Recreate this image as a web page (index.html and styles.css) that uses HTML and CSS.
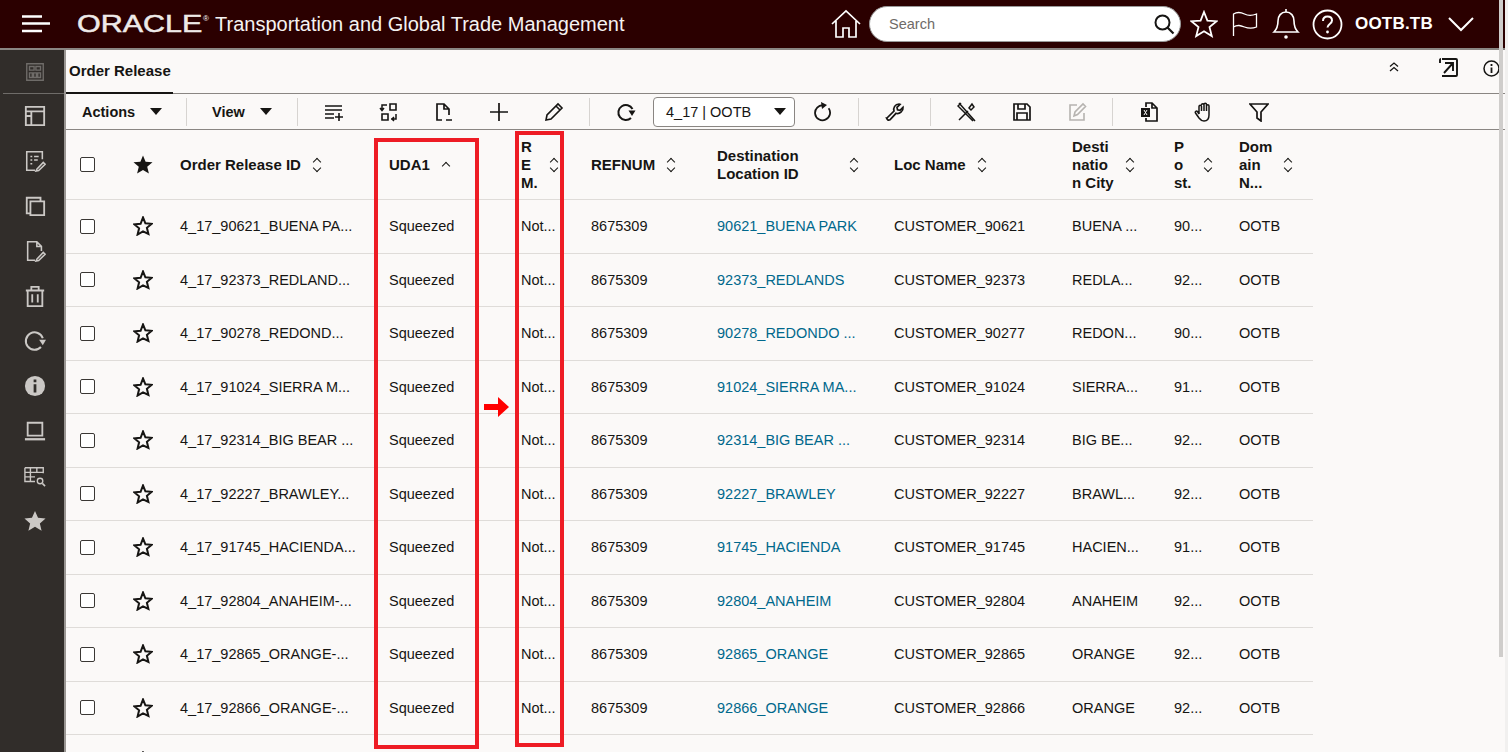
FILE: index.html
```html
<!DOCTYPE html>
<html>
<head>
	<meta charset="UTF-8">
	<title>Order Release</title>
	<link rel="stylesheet" href="styles.css">
</head>
<body>
	<header class="topbar">
		<svg class="menu-icon" width="30" height="20" viewBox="0 0 30 20"><path d="M1 2.500h20M1 9.500h28M1 17h20" stroke="#fff" stroke-width="2.400" fill="none"/></svg>
		<div class="logo">ORACLE</div><span class="logo-mark">®</span>
		<div class="app-title">Transportation and Global Trade Management</div>
		<svg class="top-icon home" width="30" height="30" viewBox="0 0 30 30"><path d="M1 15 15 2l14 13M5 12v16h7v-9h6v9h7V12" stroke="#fff" stroke-width="1.700" fill="none"/></svg>
		<div class="search">
			<span>Search</span>
			<svg width="22" height="22" viewBox="0 0 22 22"><circle cx="9.500" cy="9.500" r="7" stroke="#161513" stroke-width="2" fill="none"/><path d="m14.500 14.500 6 6" stroke="#161513" stroke-width="2.200"/></svg>
		</div>
		<svg class="top-icon star" width="28" height="28" viewBox="0 0 28 28"><path d="m14 2 3.400 8.600 9.200.6-7.100 5.900 2.300 9L14 21.200l-7.800 4.900 2.300-9-7.100-5.900 9.200-.6z" stroke="#fff" stroke-width="1.800" fill="none"/></svg>
		<svg class="top-icon flag" width="26" height="26" viewBox="0 0 26 26"><path d="M1.500 25V3c4-2.500 8-1.500 11 0s8 1.500 12 0v13c-4 1.500-8 1.500-12 0s-7-2.500-11 0" stroke="#fff" stroke-width="1.300" fill="none"/></svg>
		<svg class="top-icon bell" width="28" height="32" viewBox="0 0 28 32"><path d="M2 24c3-3 4-6 4-11 0-5 3-9 8-9s8 4 8 9c0 5 1 8 4 11zM14 4V1" stroke="#fff" stroke-width="1.600" fill="none"/><circle cx="14" cy="29" r="1.800" fill="#fff"/></svg>
		<svg class="top-icon help" width="31" height="31" viewBox="0 0 31 31"><circle cx="15.500" cy="15.500" r="14" stroke="#fff" stroke-width="1.800" fill="none"/><path d="M11 12c0-3 2-4.500 4.500-4.500s4.500 1.500 4.500 4c0 3.500-4.500 3.500-4.500 7" stroke="#fff" stroke-width="2" fill="none"/><circle cx="15.500" cy="23" r="1.400" fill="#fff"/></svg>
		<div class="user">OOTB.TB</div>
		<svg class="top-icon" width="26" height="15" viewBox="0 0 26 15"><path d="m1 1 12 12L25 1" stroke="#fff" stroke-width="2" fill="none"/></svg>
	</header>

	<div class="page">
		<nav class="sidebar">
			<svg class="dim" viewBox="0 0 24 24"><path d="M3 3h18v18H3zM6 6h5v4H6zM13 6h5v4h-5zM6 13h3v5H6zM10.500 13h3v5h-3zM15 13h3v5h-3z" fill="none" stroke="currentColor" stroke-width="1.500"/></svg>
			<div class="side-line"></div>
			<svg viewBox="0 0 24 24"><path d="M2 2h20v20H2zM2 7h20M8 7v15M2 12h6" fill="none" stroke="currentColor" stroke-width="2"/></svg>
			<svg viewBox="0 0 24 24"><path d="M20 10V2H3v20h9M7 7h2M11 7h5M7 11h2M11 11h4M7 15h2M14 21l-1 2 3-.5 7-7-2-2z" fill="none" stroke="currentColor" stroke-width="1.700"/></svg>
			<svg viewBox="0 0 24 24"><path d="M7 20H3V3h15v4M7 7h15v15H7z" fill="none" stroke="currentColor" stroke-width="2"/></svg>
			<svg viewBox="0 0 24 24"><path d="M12 22H4V2h10l5 5v5M14 2v5h5M14 21l-1 2 3-.5 7-7-2-2z" fill="none" stroke="currentColor" stroke-width="1.700"/></svg>
			<svg viewBox="0 0 24 24"><path d="M2 6h20M8 6V2h8v4M4 6v17h16V6M9 10v9M15 10v9" fill="none" stroke="currentColor" stroke-width="2"/></svg>
			<svg viewBox="0 0 24 24"><path d="M18.500 18.500A9.500 9.500 0 1 1 20.500 9" fill="none" stroke="currentColor" stroke-width="2.200"/><path d="m16.500 10.500 7.500 0-3.500 6z" fill="currentColor"/></svg>
			<svg viewBox="0 0 24 24"><circle cx="12" cy="12" r="11" fill="currentColor"/><path d="M12 5v3M12 10v9" stroke="#312d2a" stroke-width="3"/></svg>
			<svg viewBox="0 0 24 24"><path d="M4 3h16v14H4z" fill="none" stroke="currentColor" stroke-width="2"/><path d="M1 21h22" stroke="currentColor" stroke-width="2.500"/></svg>
			<svg viewBox="0 0 24 24"><path d="M1 3h20v6M1 3v15h11M1 8h20M1 13h11M7 3v15M14 3v5" fill="none" stroke="currentColor" stroke-width="1.500"/><circle cx="17.500" cy="17.500" r="3" fill="none" stroke="currentColor" stroke-width="1.500"/><path d="m20 20 3 3" stroke="currentColor" stroke-width="1.700"/></svg>
			<svg viewBox="0 0 24 24"><path d="m12 1 3.300 7.500 8.200.7-6.200 5.400 1.900 8L12 18.400l-7.200 4.200 1.900-8L.5 9.200l8.200-.7z" fill="currentColor"/></svg>
		</nav>

		<main class="content">
			<div class="tabs">
				<div class="tab">Order Release</div>
				<div class="tab-actions">
					<svg class="collapse" width="10" height="10" viewBox="0 0 10 10"><path d="m1 4.500 4-3.500 4 3.500M1 9l4-3.500L9 9" stroke="#161513" stroke-width="1.300" fill="none"/></svg>
					<svg class="popout" width="19" height="19" viewBox="0 0 19 19"><path d="M3 1h14a1 1 0 0 1 1 1v15a1 1 0 0 1-1 1H3M1 5V2a1 1 0 0 1 1-1M6 5h8v8M14 5l-9 10" stroke="#161513" stroke-width="1.900" fill="none"/></svg>
					<svg class="info" width="17" height="17" viewBox="0 0 17 17"><circle cx="8.500" cy="8.500" r="7.500" stroke="#161513" stroke-width="1.500" fill="none"/><path d="M8.500 4v2M8.500 7.500V13" stroke="#161513" stroke-width="1.800"/></svg>
				</div>
			</div>

			<div class="toolbar">
				<div class="menu-btn actions">Actions<span class="caret"></span></div>
				<div class="sep"></div>
				<div class="menu-btn view">View<span class="caret"></span></div>
				<div class="sep"></div>
				<div class="tool"><svg viewBox="0 0 20 20"><path d="M1 4h17M1 8h17M1 12h9M1 16h9M15 11v8M11 15h8" stroke="currentColor" stroke-width="1.600"/></svg></div>
				<div class="tool"><svg viewBox="0 0 20 20"><path d="M11 2h6v6h-6zM3 12h6v6H3z" stroke="currentColor" stroke-width="1.600" fill="none"/><path d="M8 3H3v5M1 6l2 2.500L5 6M12 17h5v-5M15 15l-2 2 2 2" stroke="currentColor" stroke-width="1.500" fill="none"/></svg></div>
				<div class="tool"><svg viewBox="0 0 20 20"><path d="M8 18H3V2h7l5 5v6M10 2v5h5M12 18h6" stroke="currentColor" stroke-width="1.700" fill="none"/></svg></div>
				<div class="tool"><svg viewBox="0 0 20 20"><path d="M10 1v18M1 10h18" stroke="currentColor" stroke-width="1.700"/></svg></div>
				<div class="tool"><svg viewBox="0 0 20 20"><path d="m2 18 1-5L14 2l4 4L7 17zM12 4l4 4" stroke="currentColor" stroke-width="1.600" fill="none"/></svg></div>
				<div class="sep"></div>
				<div class="tool"><svg viewBox="0 0 20 20"><path d="M15 16A7.500 7.500 0 1 1 16.500 7" stroke="currentColor" stroke-width="2" fill="none"/><path d="m12.500 8.500 7 0-3.500 5.500z" fill="currentColor"/></svg></div>
				<div class="select">4_17 | OOTB<span class="caret"></span></div>
				<div class="tool"><svg viewBox="0 0 20 20"><path d="M13 4a7.500 7.500 0 1 1-6 0" stroke="currentColor" stroke-width="1.800" fill="none" transform="rotate(30 10 10)"/><path d="m8 0 6 3-5 4z" fill="currentColor"/></svg></div>
				<div class="sep"></div>
				<div class="tool"><svg viewBox="0 0 20 20"><path d="M2 16 9 9c-1-3 1-7 5-7l1 .3-3 3 .5 2.500 2.500.5 3-3c.5 4-3.500 7-7 6l-6 6.500c-2 1-3-.5-3.500-1.800z" stroke="currentColor" stroke-width="1.700" fill="none"/></svg></div>
				<div class="sep"></div>
				<div class="tool"><svg viewBox="0 0 20 20"><path d="M2 1 18 19M4 1 1 4l15 15M15 2l-3 4 2 2 3-3zM11 9l-9 9" stroke="currentColor" stroke-width="1.500" fill="none"/></svg></div>
				<div class="tool"><svg viewBox="0 0 20 20"><path d="M2 2h13l3 3v13H2zM6 2v5h7V2M5 18v-7h10v7" stroke="currentColor" stroke-width="1.700" fill="none"/></svg></div>
				<div class="tool off"><svg viewBox="0 0 20 20"><path d="M10 3H3v15h14v-7M7 14l1-4 8-8 2.500 2.500-8 8z" stroke="currentColor" stroke-width="1.600" fill="none"/></svg></div>
				<div class="sep"></div>
				<div class="tool"><svg viewBox="0 0 20 20"><path d="M7 5V1h6l5 5v13H7v-3M13 1v5h5" stroke="currentColor" stroke-width="1.700" fill="none"/><path d="M2 6h9v9H2z" fill="currentColor"/><path d="m5 8 3 5M8 8l-3 5" stroke="#fbf9f8" stroke-width="1"/></svg></div>
				<div class="tool"><svg viewBox="0 0 20 20"><path d="M5 12V4.500a1.200 1.200 0 0 1 2.500 0V9m0-6a1.200 1.200 0 0 1 2.500 0v6m0-6.500a1.200 1.200 0 0 1 2.500 0V9m0-5a1.200 1.200 0 0 1 2.500 0v9c0 4-2 6-5 6-2.500 0-3.500-1-5-3L1.500 11c-.8-1.500 1-2.500 2-1.500L5 12" stroke="currentColor" stroke-width="1.500" fill="none"/></svg></div>
				<div class="tool"><svg viewBox="0 0 20 20"><path d="M1 2h18l-7 8v9l-4-3v-6z" stroke="currentColor" stroke-width="1.700" fill="none"/></svg></div>
			</div>

			<div class="grid">
				<div class="row head">
					<div class="cell"><span class="check"></span></div>
					<div class="cell"><svg class="fav" viewBox="0 0 20 20"><path d="m10 .5 2.600 6.300 6.900.5-5.300 4.400 1.700 6.800L10 14.900l-5.900 3.600 1.700-6.800L.5 7.300l6.900-.5z" fill="#161513"/></svg></div>
					<div class="cell"><span class="label">Order Release ID</span><span class="sort"></span></div>
					<div class="cell"><span class="label">UDA1</span><span class="sort up"></span></div>
					<div class="cell"><span class="label">R<br>E<br>M.</span><span class="sort"></span></div>
					<div class="cell"><span class="label">REFNUM</span><span class="sort"></span></div>
					<div class="cell spread"><span class="label">Destination<br>Location ID</span><span class="sort"></span></div>
					<div class="cell"><span class="label">Loc Name</span><span class="sort"></span></div>
					<div class="cell"><span class="label">Desti<br>natio<br>n City</span><span class="sort"></span></div>
					<div class="cell"><span class="label">P<br>o<br>st.</span><span class="sort"></span></div>
					<div class="cell"><span class="label">Dom<br>ain<br>N...</span><span class="sort"></span></div>
				</div>
				<div class="row">
					<div class="cell"><span class="check"></span></div><div class="cell"><svg class="fav" viewBox="0 0 20 20"><path d="m10 1.500 2.400 5.800 6.300.5-4.800 4 1.500 6.200L10 15.300 4.600 18.500l1.500-6.200-4.800-4 6.300-.5z" fill="none" stroke="#161513" stroke-width="2"/></svg></div>
					<div class="cell">4_17_90621_BUENA PA...</div><div class="cell">Squeezed</div><div class="cell">Not...</div><div class="cell">8675309</div><div class="cell"><a>90621_BUENA PARK</a></div><div class="cell">CUSTOMER_90621</div><div class="cell">BUENA ...</div><div class="cell">90...</div><div class="cell">OOTB</div>
				</div>
				<div class="row">
					<div class="cell"><span class="check"></span></div><div class="cell"><svg class="fav" viewBox="0 0 20 20"><path d="m10 1.500 2.400 5.800 6.300.5-4.800 4 1.500 6.200L10 15.300 4.600 18.500l1.500-6.200-4.800-4 6.300-.5z" fill="none" stroke="#161513" stroke-width="2"/></svg></div>
					<div class="cell">4_17_92373_REDLAND...</div><div class="cell">Squeezed</div><div class="cell">Not...</div><div class="cell">8675309</div><div class="cell"><a>92373_REDLANDS</a></div><div class="cell">CUSTOMER_92373</div><div class="cell">REDLA...</div><div class="cell">92...</div><div class="cell">OOTB</div>
				</div>
				<div class="row">
					<div class="cell"><span class="check"></span></div><div class="cell"><svg class="fav" viewBox="0 0 20 20"><path d="m10 1.500 2.400 5.800 6.300.5-4.800 4 1.500 6.200L10 15.300 4.600 18.500l1.500-6.200-4.800-4 6.300-.5z" fill="none" stroke="#161513" stroke-width="2"/></svg></div>
					<div class="cell">4_17_90278_REDOND...</div><div class="cell">Squeezed</div><div class="cell">Not...</div><div class="cell">8675309</div><div class="cell"><a>90278_REDONDO ...</a></div><div class="cell">CUSTOMER_90277</div><div class="cell">REDON...</div><div class="cell">90...</div><div class="cell">OOTB</div>
				</div>
				<div class="row">
					<div class="cell"><span class="check"></span></div><div class="cell"><svg class="fav" viewBox="0 0 20 20"><path d="m10 1.500 2.400 5.800 6.300.5-4.800 4 1.500 6.200L10 15.300 4.600 18.500l1.500-6.200-4.800-4 6.300-.5z" fill="none" stroke="#161513" stroke-width="2"/></svg></div>
					<div class="cell">4_17_91024_SIERRA M...</div><div class="cell">Squeezed</div><div class="cell">Not...</div><div class="cell">8675309</div><div class="cell"><a>91024_SIERRA MA...</a></div><div class="cell">CUSTOMER_91024</div><div class="cell">SIERRA...</div><div class="cell">91...</div><div class="cell">OOTB</div>
				</div>
				<div class="row">
					<div class="cell"><span class="check"></span></div><div class="cell"><svg class="fav" viewBox="0 0 20 20"><path d="m10 1.500 2.400 5.800 6.300.5-4.800 4 1.500 6.200L10 15.300 4.600 18.500l1.500-6.200-4.800-4 6.300-.5z" fill="none" stroke="#161513" stroke-width="2"/></svg></div>
					<div class="cell">4_17_92314_BIG BEAR ...</div><div class="cell">Squeezed</div><div class="cell">Not...</div><div class="cell">8675309</div><div class="cell"><a>92314_BIG BEAR ...</a></div><div class="cell">CUSTOMER_92314</div><div class="cell">BIG BE...</div><div class="cell">92...</div><div class="cell">OOTB</div>
				</div>
				<div class="row">
					<div class="cell"><span class="check"></span></div><div class="cell"><svg class="fav" viewBox="0 0 20 20"><path d="m10 1.500 2.400 5.800 6.300.5-4.800 4 1.500 6.200L10 15.300 4.600 18.500l1.500-6.200-4.800-4 6.300-.5z" fill="none" stroke="#161513" stroke-width="2"/></svg></div>
					<div class="cell">4_17_92227_BRAWLEY...</div><div class="cell">Squeezed</div><div class="cell">Not...</div><div class="cell">8675309</div><div class="cell"><a>92227_BRAWLEY</a></div><div class="cell">CUSTOMER_92227</div><div class="cell">BRAWL...</div><div class="cell">92...</div><div class="cell">OOTB</div>
				</div>
				<div class="row">
					<div class="cell"><span class="check"></span></div><div class="cell"><svg class="fav" viewBox="0 0 20 20"><path d="m10 1.500 2.400 5.800 6.300.5-4.800 4 1.500 6.200L10 15.300 4.600 18.500l1.500-6.200-4.800-4 6.300-.5z" fill="none" stroke="#161513" stroke-width="2"/></svg></div>
					<div class="cell">4_17_91745_HACIENDA...</div><div class="cell">Squeezed</div><div class="cell">Not...</div><div class="cell">8675309</div><div class="cell"><a>91745_HACIENDA</a></div><div class="cell">CUSTOMER_91745</div><div class="cell">HACIEN...</div><div class="cell">91...</div><div class="cell">OOTB</div>
				</div>
				<div class="row">
					<div class="cell"><span class="check"></span></div><div class="cell"><svg class="fav" viewBox="0 0 20 20"><path d="m10 1.500 2.400 5.800 6.300.5-4.800 4 1.500 6.200L10 15.300 4.600 18.500l1.500-6.200-4.800-4 6.300-.5z" fill="none" stroke="#161513" stroke-width="2"/></svg></div>
					<div class="cell">4_17_92804_ANAHEIM-...</div><div class="cell">Squeezed</div><div class="cell">Not...</div><div class="cell">8675309</div><div class="cell"><a>92804_ANAHEIM</a></div><div class="cell">CUSTOMER_92804</div><div class="cell">ANAHEIM</div><div class="cell">92...</div><div class="cell">OOTB</div>
				</div>
				<div class="row">
					<div class="cell"><span class="check"></span></div><div class="cell"><svg class="fav" viewBox="0 0 20 20"><path d="m10 1.500 2.400 5.800 6.300.5-4.800 4 1.500 6.200L10 15.300 4.600 18.500l1.500-6.200-4.800-4 6.300-.5z" fill="none" stroke="#161513" stroke-width="2"/></svg></div>
					<div class="cell">4_17_92865_ORANGE-...</div><div class="cell">Squeezed</div><div class="cell">Not...</div><div class="cell">8675309</div><div class="cell"><a>92865_ORANGE</a></div><div class="cell">CUSTOMER_92865</div><div class="cell">ORANGE</div><div class="cell">92...</div><div class="cell">OOTB</div>
				</div>
				<div class="row">
					<div class="cell"><span class="check"></span></div><div class="cell"><svg class="fav" viewBox="0 0 20 20"><path d="m10 1.500 2.400 5.800 6.300.5-4.800 4 1.500 6.200L10 15.300 4.600 18.500l1.500-6.200-4.800-4 6.300-.5z" fill="none" stroke="#161513" stroke-width="2"/></svg></div>
					<div class="cell">4_17_92866_ORANGE-...</div><div class="cell">Squeezed</div><div class="cell">Not...</div><div class="cell">8675309</div><div class="cell"><a>92866_ORANGE</a></div><div class="cell">CUSTOMER_92866</div><div class="cell">ORANGE</div><div class="cell">92...</div><div class="cell">OOTB</div>
				</div>
				<div class="row">
					<div class="cell"><span class="check"></span></div><div class="cell"><svg class="fav" viewBox="0 0 20 20"><path d="m10 1.500 2.400 5.800 6.300.5-4.800 4 1.500 6.200L10 15.300 4.600 18.500l1.500-6.200-4.800-4 6.300-.5z" fill="none" stroke="#161513" stroke-width="2"/></svg></div>
				</div>
			</div>
		</main>
	</div>

	<!-- red annotations drawn over the screenshot -->
	<div class="mark mark-uda"></div>
	<div class="mark mark-rem"></div>
	<svg class="mark-arrow" width="25" height="20" viewBox="0 0 25 20"><path d="M0 7h14V0l11 10-11 10v-7H0z" fill="#f00"/></svg>
	<div class="scrollbar"></div>
	<div class="window-edge"></div>
</body>
</html>
```

FILE: styles.css
```css
body {
	font-family: "Liberation Sans", Arial, sans-serif;
	font-size: 14.5px;
	color: #161513;
	margin: 0;
	padding: 0;
	height: 752px;
	overflow: hidden;
	background-color: #fbf9f8;
}

.topbar {
	display: flex;
	align-items: center;
	height: 48px;
	background-color: #2b0000;
	color: #fff;
}

.menu-icon {
	margin-left: 21px;
	flex: none;
}

.logo {
	width: 126px;
	margin-left: 26px;
	font-size: 24px;
	line-height: 24px;
	color: #eeeae8;
	-webkit-text-stroke: 0.5px #eeeae8;
	transform: scaleX(1.27);
	transform-origin: left center;
}

.logo-mark {
	font-size: 8px;
	margin: -12px 0 0 0;
	width: 12px;
}

.app-title {
	font-size: 20px;
	width: 617px;
	color: #f5f3f2;
}

.top-icon {
	flex: none;
}

.home {
	margin-left: -1px;
}

.search {
	display: flex;
	align-items: center;
	justify-content: space-between;
	box-sizing: border-box;
	width: 312px;
	height: 36px;
	margin-left: 8px;
	padding: 0 5px 0 19px;
	background-color: #fff;
	border: 1px solid #999;
	border-radius: 18px;
	color: #6f6b68;
}

.star {
	margin-left: 9px;
}

.flag {
	margin-left: 14px;
}

.bell {
	margin-left: 14px;
}

.help {
	margin-left: 12px;
}

.user {
	width: 79px;
	margin: 0 14px 0 12px;
	font-size: 17px;
	letter-spacing: 0.2px;
	font-weight: bold;
	white-space: nowrap;
}

.page {
	display: flex;
	height: 704px;
	border-top: 2px solid #8a8683;
	box-sizing: border-box;
}

.sidebar {
	display: flex;
	flex-direction: column;
	align-items: center;
	flex: none;
	box-sizing: border-box;
	width: 64px;
	padding: 11px 0 0 6px;
	background-color: #312d2a;
	color: #cbc8c5;
}

.sidebar svg {
	width: 22px;
	height: 22px;
	margin-bottom: 23px;
	flex: none;
}

.sidebar svg.dim {
	color: #6f6c69;
	margin-bottom: 10px;
}

.side-line {
	width: 61px;
	height: 1px;
	margin: 0 0 11px -3px;
	background-color: #6f6c69;
	flex: none;
}

.content {
	flex: 1;
	min-width: 0;
	border-left: 2px solid #9a9693;
}

.tabs {
	display: flex;
	justify-content: space-between;
	height: 43px;
	border-bottom: 1px solid #8a8683;
}

.tab {
	box-sizing: border-box;
	height: 44px;
	padding: 12px 0 0 3px;
	width: 107px;
	font-size: 15px;
	font-weight: bold;
	white-space: nowrap;
	border-bottom: 2px solid #161513;
}

.tab-actions {
	display: flex;
	align-items: flex-start;
	margin-right: 8px;
}

.collapse {
	margin: 12px 40px 0 0;
}

.popout {
	margin: 8px 25px 0 0;
}

.info {
	margin-top: 10px;
}

.toolbar {
	display: flex;
	align-items: center;
	height: 35px;
	border-bottom: 1px solid #8a8683;
}

.menu-btn {
	box-sizing: border-box;
	display: flex;
	align-items: center;
	font-weight: bold;
}

.actions {
	width: 120px;
	padding-left: 16px;
}

.view {
	width: 110px;
	padding-left: 25px;
}

.caret {
	width: 0;
	height: 0;
	margin-left: 15px;
	border-left: 6px solid transparent;
	border-right: 6px solid transparent;
	border-top: 7px solid #161513;
}

.sep {
	width: 1px;
	height: 28px;
	margin: 0 8px;
	background-color: #d7d4d1;
	flex: none;
}

.menu-btn + .sep {
	margin: 0;
}

.view + .sep {
	margin-right: 8px;
}

.tool {
	display: flex;
	justify-content: center;
	align-items: center;
	flex: none;
	width: 55px;
	color: #161513;
}

.tool svg {
	width: 20px;
	height: 20px;
}

.tool.off {
	color: #b6b3b0;
}

.select {
	display: flex;
	align-items: center;
	justify-content: space-between;
	box-sizing: border-box;
	flex: none;
	width: 142px;
	height: 30px;
	padding: 0 8px 0 12px;
	background-color: #fff;
	border: 1px solid #8a8683;
	border-radius: 4px;
}

.grid {
	width: 1247px;
}

.row {
	display: grid;
	grid-template-columns: 55px 47px 209px 132px 70px 126px 177px 178px 102px 65px 86px;
	box-sizing: border-box;
	height: 53.5px;
	border-bottom: 1px solid #dfdcd9;
}

.head {
	height: 70px;
	font-size: 15px;
	font-weight: bold;
}

.cell {
	display: flex;
	align-items: center;
	padding-left: 12px;
	white-space: nowrap;
	min-width: 0;
	overflow: hidden;
}

.cell:first-child {
	padding-left: 14px;
}

.head .cell {
	line-height: 18px;
}

.spread {
	justify-content: space-between;
	padding-right: 22px;
}

.label {
	flex: none;
}

.cell a {
	color: #00688c;
}

.check {
	box-sizing: border-box;
	width: 15px;
	height: 15px;
	background-color: #fff;
	border: 1.5px solid #3a3734;
	border-radius: 2px;
}

.fav {
	width: 20px;
	height: 20px;
}

.sort {
	position: relative;
	flex: none;
	width: 11px;
	height: 14px;
	margin-left: 11px;
}

.sort::before,
.sort::after {
	content: "";
	position: absolute;
	left: 2px;
	width: 5px;
	height: 5px;
	border-left: 1.5px solid #161513;
	border-top: 1.5px solid #161513;
}

.sort::before {
	top: 1px;
	transform: rotate(45deg);
}

.sort::after {
	bottom: 1px;
	transform: rotate(225deg);
}

.sort.up::after {
	display: none;
}

.sort.up::before {
	top: 5px;
}

.mark {
	position: absolute;
	box-sizing: border-box;
	border: 4px solid #ee1c25;
}

.mark-uda {
	left: 374px;
	top: 138px;
	width: 105px;
	height: 611px;
}

.mark-rem {
	left: 515px;
	top: 131px;
	width: 49px;
	height: 616px;
}

.mark-arrow {
	position: absolute;
	left: 484px;
	top: 397px;
}

.scrollbar {
	position: absolute;
	left: 1499px;
	top: 0;
	width: 4px;
	height: 657px;
	background-color: #cfcdcb;
}

.window-edge {
	position: absolute;
	left: 1505px;
	top: 0;
	width: 3px;
	height: 752px;
	background-color: #f1f0ef;
}
```
